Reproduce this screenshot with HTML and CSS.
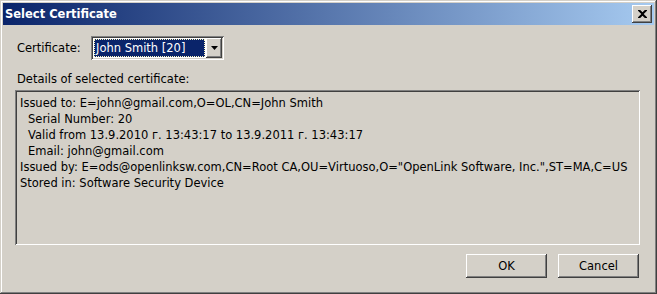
FILE: index.html
```html
<!DOCTYPE html>
<html lang="en">
<head>
  <meta charset="UTF-8">
  <title>Select Certificate</title>
  <link rel="stylesheet" href="styles.css">
</head>
<body>
  <div class="window">
    <div class="titlebar">
      <span class="title">Select Certificate</span>
      <button class="close-btn" aria-label="Close">
        <svg width="9" height="8" viewBox="0 0 9 8"><path d="M0 0h2.2l2.3 2.3L6.8 0H9v.8L5.7 4 9 7.2V8H6.8L4.5 5.7 2.2 8H0v-.8L3.3 4 0 .8z" fill="#000"/></svg>
      </button>
    </div>
    <div class="content">
      <div class="cert-row">
        <label class="label" for="certSelect">Certificate:</label>
        <div class="combo" id="certSelect">
          <div class="combo-field"><span class="combo-text">John Smith [20]</span></div>
          <div class="combo-btn">
            <svg width="7" height="4" viewBox="0 0 7 4"><path d="M0 0h7L3.5 4z" fill="#000"/></svg>
          </div>
        </div>
      </div>
      <div class="label details-label">Details of selected certificate:</div>
      <div class="details-box">
        <div>Issued to: E=john@gmail.com,O=OL,CN=John Smith</div>
        <div class="indent">Serial Number: 20</div>
        <div class="indent">Valid from 13.9.2010 г. 13:43:17 to 13.9.2011 г. 13:43:17</div>
        <div class="indent">Email: john@gmail.com</div>
        <div>Issued by: E=ods@openlinksw.com,CN=Root CA,OU=Virtuoso,O="OpenLink Software, Inc.",ST=MA,C=US</div>
        <div>Stored in: Software Security Device</div>
      </div>
      <div class="buttons">
        <button class="btn">OK</button>
        <button class="btn">Cancel</button>
      </div>
    </div>
  </div>
</body>
</html>
```

FILE: styles.css
```css
/* Win2000 style dialog */
body {
  margin: 0;
  padding: 0;
  font-family: "DejaVu Sans", sans-serif;
  font-size: 11.5px;
  color: #000;
}
.window {
  width: 657px;
  height: 294px;
  box-sizing: border-box;
  padding: 3px;
  background: #d4d0c8;
  box-shadow: inset -1px -1px #404040, inset 1px 1px #d4d0c8, inset -2px -2px #808080, inset 2px 2px #fff;
  display: flex;
  flex-direction: column;
}
.titlebar {
  height: 22px;
  background: linear-gradient(to right, #0a246a, #a6caf0);
  display: flex;
  align-items: center;
  justify-content: space-between;
  padding: 0 2px 0 2px;
}
.title {
  color: #fff;
  font-weight: bold;
  font-size: 11.5px;
}
.close-btn {
  width: 20px;
  height: 18px;
  padding: 0;
  border: none;
  background: #d4d0c8;
  box-shadow: inset -1px -1px #404040, inset 1px 1px #fff, inset -2px -2px #808080;
  display: flex;
  align-items: center;
  justify-content: center;
}
.content {
  flex: 1;
  padding: 11px 14px 0 12px;
  display: flex;
  flex-direction: column;
}
.label {
  padding-left: 2px;
}
.cert-row {
  display: flex;
  align-items: center;
  height: 24px;
}
.cert-row .label {
  width: 74px;
}
.combo {
  width: 133px;
  height: 24px;
  box-sizing: border-box;
  padding: 2px;
  background: #fff;
  box-shadow: inset 1px 1px #808080, inset -1px -1px #fff, inset 2px 2px #404040, inset -2px -2px #d4d0c8;
  display: flex;
}
.combo-field {
  flex: 1;
  padding: 1px;
  background: #fff;
  display: flex;
}
.combo-text {
  flex: 1;
  background: #0a246a;
  color: #fff;
  outline: 1px dotted #fff8c0;
  outline-offset: -1px;
  padding-left: 2px;
  line-height: 18px;
}
.combo-btn {
  width: 16px;
  background: #d4d0c8;
  box-shadow: inset -1px -1px #404040, inset 1px 1px #fff, inset -2px -2px #808080;
  display: flex;
  align-items: center;
  justify-content: center;
}
.details-label {
  margin-top: 11px;
  line-height: 16px;
}
.details-box {
  margin-top: 3px;
  height: 155px;
  box-sizing: border-box;
  padding: 5px 5px;
  line-height: 16px;
  box-shadow: inset 1px 1px #808080, inset -1px -1px #fff, inset 2px 2px #404040, inset -2px -2px #d4d0c8;
  white-space: nowrap;
}
.indent {
  padding-left: 8px;
}
.buttons {
  display: flex;
  justify-content: flex-end;
  gap: 11px;
  margin-top: 9px;
  padding-right: 1px;
}
.btn {
  width: 81px;
  height: 24px;
  border: none;
  background: #d4d0c8;
  font-family: inherit;
  font-size: 11.5px;
  color: #000;
  box-shadow: inset -1px -1px #404040, inset 1px 1px #fff, inset -2px -2px #808080;
}
```
